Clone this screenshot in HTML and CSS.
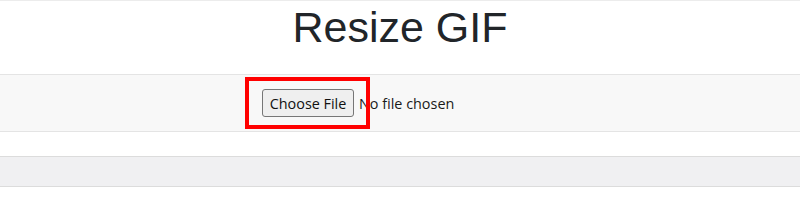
FILE: index.html
```html
<!DOCTYPE html>
<html lang="en">
<head>
    <meta charset="UTF-8">
    <meta name="viewport" content="width=device-width, initial-scale=1.0">
    <title>Resize GIF</title>
    <link rel="stylesheet" href="styles.css">
</head>
<body>
    <header class="page-header">
        <h1>Resize GIF</h1>
    </header>

    <section class="upload-band">
        <div class="upload-row">
            <span class="picker">
                <input type="file" id="gifFile" class="file-input" accept="image/gif">
                <span class="highlight"></span>
            </span>
        </div>
    </section>

    <div class="result-band"></div>
</body>
</html>
```

FILE: styles.css
```css
/* Style général */
body {
    margin: 0;
    padding: 0;
    background: #ffffff;
    color: #212529;
    font-family: 'Liberation Sans', Arial, sans-serif;
}

.page-header {
    border-top: 1px solid #ececec;
    padding-bottom: 21px;
    text-align: center;
}

h1 {
    margin: 0;
    font-size: 43px;
    font-weight: 400;
    line-height: 52px;
    color: #212529;
}

/* Zone de sélection du fichier */
.upload-band {
    background: #f8f8f8;
    border-top: 1px solid #e4e4e4;
    border-bottom: 1px solid #e4e4e4;
    padding: 14px 0 14px;
}

.upload-row {
    display: flex;
    justify-content: center;
}

.picker {
    position: relative;
    display: inline-block;
    width: 276px;
}

.file-input {
    display: block;
    width: 276px;
    height: 28px;
    font-family: 'Open Sans', 'Noto Sans', sans-serif;
    font-size: 14.4px;
    color: #1a1a1a;
}

.file-input::file-selector-button {
    width: 92px;
    height: 28px;
    margin-right: 5px;
    padding: 0;
    background: #efefef;
    border: 1px solid #767676;
    border-radius: 3px;
    font-family: inherit;
    font-size: 14.4px;
    color: #111111;
}

/* Cadre rouge d'annotation */
.highlight {
    position: absolute;
    left: -17px;
    top: -12px;
    width: 117px;
    height: 44px;
    border: 4px solid #ff0000;
    pointer-events: none;
}

.result-band {
    margin-top: 24px;
    height: 29px;
    background: #f0f0f2;
    border-top: 1px solid #dcdcdc;
    border-bottom: 1px solid #dcdcdc;
}
```
